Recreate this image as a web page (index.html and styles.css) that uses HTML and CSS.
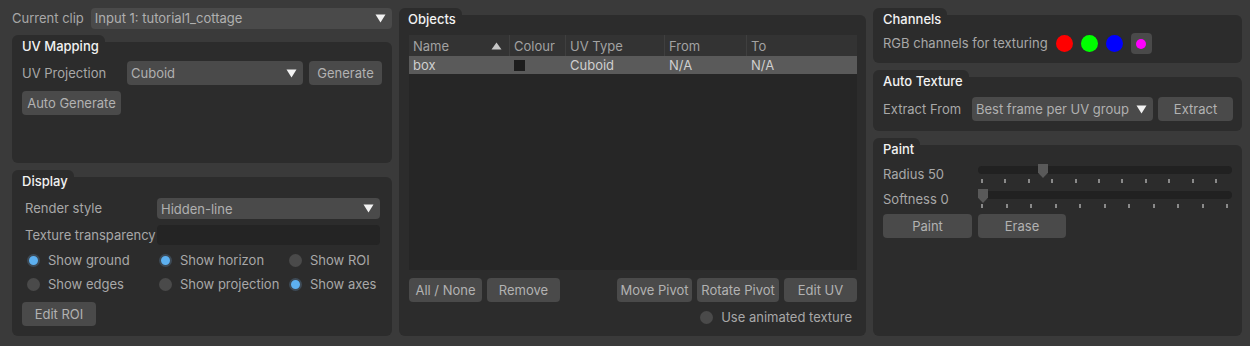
FILE: index.html
```html
<!DOCTYPE html>
<html lang="en">
<head>
    <meta charset="UTF-8">
    <meta name="viewport" content="width=device-width, initial-scale=1.0">
    <title>UV Project</title>
    <link rel="stylesheet" href="styles.css">
</head>
<body>
    <div class="col col-left">
        <div class="row clip-row">
            <span class="label clip-label">Current clip</span>
            <div class="combo combo-clip">
                <span>Input 1: tutorial1_cottage</span>
                <svg class="arrow" width="11" height="9" viewBox="0 0 11 9"><path d="M0.5 0.5 H10.5 L5.5 8.5 Z" fill="#f2f2f2"/></svg>
            </div>
        </div>

        <section class="group group-uv">
            <div class="tab">UV Mapping</div>
            <div class="box box-uv">
                <div class="row">
                    <span class="label uv-label">UV Projection</span>
                    <div class="combo combo-uv">
                        <span>Cuboid</span>
                        <svg class="arrow" width="11" height="9" viewBox="0 0 11 9"><path d="M0.5 0.5 H10.5 L5.5 8.5 Z" fill="#f2f2f2"/></svg>
                    </div>
                    <button class="btn btn-generate">Generate</button>
                </div>
                <button class="btn btn-auto">Auto Generate</button>
            </div>
        </section>

        <section class="group group-display">
            <div class="tab">Display</div>
            <div class="box box-display">
                <div class="row">
                    <span class="label display-label">Render style</span>
                    <div class="combo combo-render">
                        <span>Hidden-line</span>
                        <svg class="arrow" width="11" height="9" viewBox="0 0 11 9"><path d="M0.5 0.5 H10.5 L5.5 8.5 Z" fill="#f2f2f2"/></svg>
                    </div>
                </div>
                <div class="row row-transp">
                    <span class="label display-label">Texture transparency</span>
                    <div class="field"></div>
                </div>
                <div class="radio-grid">
                    <label class="opt"><span class="radio on"></span>Show ground</label>
                    <label class="opt"><span class="radio on"></span>Show horizon</label>
                    <label class="opt"><span class="radio"></span>Show ROI</label>
                    <label class="opt"><span class="radio"></span>Show edges</label>
                    <label class="opt"><span class="radio"></span>Show projection</label>
                    <label class="opt"><span class="radio on"></span>Show axes</label>
                </div>
                <button class="btn btn-roi">Edit ROI</button>
            </div>
        </section>
    </div>

    <div class="col col-center">
        <section class="group group-objects">
            <div class="tab tab-objects">Objects</div>
            <div class="box box-objects">
                <div class="table">
                    <div class="trow thead">
                        <div class="cell">Name<svg class="sort" width="11" height="8" viewBox="0 0 11 8"><path d="M0.5 7.5 H10.5 L5.5 0.5 Z" fill="#c6c6c6"/></svg></div>
                        <div class="cell">Colour</div>
                        <div class="cell">UV Type</div>
                        <div class="cell">From</div>
                        <div class="cell">To</div>
                    </div>
                    <div class="trow selected">
                        <div class="cell">box</div>
                        <div class="cell"><span class="swatch"></span></div>
                        <div class="cell">Cuboid</div>
                        <div class="cell">N/A</div>
                        <div class="cell">N/A</div>
                    </div>
                </div>
                <div class="row btn-row">
                    <button class="btn w-73">All / None</button>
                    <button class="btn w-73">Remove</button>
                    <button class="btn btn-move">Move Pivot</button>
                    <button class="btn btn-rotate">Rotate Pivot</button>
                    <button class="btn w-73">Edit UV</button>
                </div>
                <div class="row anim-row">
                    <label class="opt"><span class="radio"></span>Use animated texture</label>
                </div>
            </div>
        </section>
    </div>

    <div class="col col-right">
        <section class="group group-channels">
            <div class="tab">Channels</div>
            <div class="box box-channels">
                <div class="row channel-row">
                    <span class="label">RGB channels for texturing</span>
                    <span class="dot red"></span>
                    <span class="dot green"></span>
                    <span class="dot blue"></span>
                    <span class="alpha-btn"><span class="alpha-dot"></span></span>
                </div>
            </div>
        </section>

        <section class="group group-auto">
            <div class="tab">Auto Texture</div>
            <div class="box box-auto">
                <div class="row">
                    <span class="label extract-label">Extract From</span>
                    <div class="combo combo-extract">
                        <span>Best frame per UV group</span>
                        <svg class="arrow" width="11" height="9" viewBox="0 0 11 9"><path d="M0.5 0.5 H10.5 L5.5 8.5 Z" fill="#f2f2f2"/></svg>
                    </div>
                    <button class="btn btn-extract">Extract</button>
                </div>
            </div>
        </section>

        <section class="group group-paint">
            <div class="tab">Paint</div>
            <div class="box box-paint">
                <div class="slider-grid">
                    <span class="label">Radius 50</span>
                    <div class="slider">
                        <div class="track"><span class="thumb" style="left: 60px"></span></div>
                        <div class="ticks ticks-radius">
                            <i></i><i></i><i></i><i></i><i></i><i></i><i></i><i></i><i></i><i></i><i></i>
                        </div>
                    </div>
                    <span class="label">Softness 0</span>
                    <div class="slider">
                        <div class="track"><span class="thumb" style="left: 0px"></span></div>
                        <div class="ticks ticks-soft">
                            <i></i><i></i><i></i><i></i><i></i><i></i><i></i><i></i><i></i><i></i><i></i>
                        </div>
                    </div>
                </div>
                <div class="row paint-row">
                    <button class="btn btn-paint">Paint</button>
                    <button class="btn btn-erase">Erase</button>
                </div>
            </div>
        </section>
    </div>
</body>
</html>
```

FILE: styles.css
```css
body {
    margin: 0;
    height: 346px;
    box-sizing: border-box;
    padding: 8px 8px 10px 12px;
    background-color: #3a3a3a;
    font-family: Inter, "Noto Sans", sans-serif;
    font-size: 13px;
    color: #a8a8a8;
    display: grid;
    grid-template-columns: 380px 467px 369px;
    column-gap: 7px;
    overflow: hidden;
}
.col {
    display: flex;
    flex-direction: column;
    gap: 7px;
    min-height: 0;
}
.row {
    display: flex;
    align-items: center;
}
.label {
    white-space: nowrap;
    line-height: 17px;
}

/* group boxes */
.group {
    display: flex;
    flex-direction: column;
}
.tab {
    position: relative;
    z-index: 1;
    align-self: flex-start;
    height: 20px;
    box-sizing: border-box;
    padding: 3px 6px 0 10px;
    line-height: 17px;
    margin-bottom: -13px;
    background-color: #2c2c2c;
    border-radius: 6px 6px 0 0;
    color: #f2f2f2;
    font-weight: 500;
}
.box {
    flex: 1;
    background-color: #2c2c2c;
    border-radius: 6px;
    box-sizing: border-box;
}

/* controls */
.combo {
    display: flex;
    align-items: center;
    justify-content: space-between;
    background-color: #4a4a4a;
    border-radius: 4px;
    color: #b0b0b0;
    padding: 0 6px 0 4px;
    box-sizing: border-box;
}
.btn {
    font: inherit;
    color: #b2b2b2;
    background-color: #4a4a4a;
    border: none;
    border-radius: 4px;
    height: 24px;
    padding: 0;
    text-align: center;
    white-space: nowrap;
}
.field {
    flex: 1;
    height: 20px;
    background-color: #242424;
    border-radius: 4px;
}
.opt {
    display: flex;
    align-items: center;
    gap: 8px;
    white-space: nowrap;
    height: 20px;
}
.radio {
    width: 13px;
    height: 13px;
    border-radius: 50%;
    background-color: #4a4a4a;
    box-sizing: border-box;
    flex-shrink: 0;
}
.radio.on {
    background-color: #5db0f0;
    border: 2px solid #3d4a56;
}

/* left column */
.clip-row {
    height: 20px;
    gap: 7px;
}
.combo-clip {
    flex: 1;
    height: 21px;
}
.group-uv {
    height: 128px;
}
.box-uv {
    padding: 19px 10px 0 10px;
}
.uv-label {
    width: 105px;
}
.combo-uv {
    width: 176px;
    height: 24px;
}
.btn-generate {
    width: 73px;
    margin-left: 6px;
}
.btn-auto {
    display: block;
    width: 99px;
    margin-top: 6px;
}
.group-display {
    flex: 1;
}
.box-display {
    padding: 21px 12px 0 13px;
}
.display-label {
    width: 132px;
}
.combo-render {
    flex: 1;
    height: 21px;
}
.row-transp {
    margin-top: 6px;
}
.radio-grid {
    display: grid;
    grid-template-columns: 132px 130px 1fr;
    row-gap: 4px;
    margin-top: 5px;
    padding-left: 2px;
}
.btn-roi {
    display: block;
    width: 74px;
    margin: 8px 0 0 -3px;
}

/* centre column */
.group-objects {
    flex: 1;
}
.tab-objects {
    padding-left: 9px;
}
.box-objects {
    display: flex;
    flex-direction: column;
    padding: 20px 9px 9px 10px;
}
.table {
    flex: 1;
    background-color: #262626;
}
.trow {
    display: grid;
    grid-template-columns: 101px 56px 99px 82px 1fr;
}
.thead {
    height: 21px;
    background-color: #333333;
    color: #a2a2a2;
}
.thead .cell {
    border-right: 1px solid #3f3f3f;
}
.thead .cell:last-child {
    border-right: none;
}
.cell {
    display: flex;
    align-items: center;
    justify-content: space-between;
    padding: 0 7px 0 4px;
    white-space: nowrap;
}
.selected {
    height: 18px;
    background-color: #5a5a5a;
    color: #cfcfcf;
}
.swatch {
    width: 11px;
    height: 11px;
    background-color: #1d1d1d;
}
.btn-row {
    margin-top: 8px;
    gap: 5px;
}
.w-73 {
    width: 73px;
}
.btn-move {
    width: 75px;
    margin-left: auto;
}
.btn-rotate {
    width: 82px;
}
.anim-row {
    justify-content: flex-end;
    margin-top: 5px;
    padding-right: 5px;
}

/* right column */
.group-channels {
    height: 55px;
}
.box-channels {
    padding: 18px 10px 0 10px;
}
.channel-row {
    gap: 8px;
    height: 21px;
}
.dot {
    width: 17px;
    height: 17px;
    border-radius: 50%;
}
.red { background-color: #ff0000; }
.green { background-color: #00ff00; }
.blue { background-color: #0000ff; }
.alpha-btn {
    width: 21px;
    height: 21px;
    border-radius: 4px;
    background-color: #4a4a4a;
    display: flex;
    align-items: center;
    justify-content: center;
}
.alpha-dot {
    width: 10px;
    height: 10px;
    border-radius: 50%;
    background-color: #ff00ff;
}
.group-auto {
    height: 61px;
}
.box-auto {
    padding: 20px 9px 0 10px;
}
.extract-label {
    width: 89px;
}
.combo-extract {
    width: 181px;
    height: 24px;
}
.btn-extract {
    width: 75px;
    margin-left: 5px;
}
.group-paint {
    flex: 1;
}
.box-paint {
    padding: 21px 10px 0 10px;
}
.slider-grid {
    display: grid;
    grid-template-columns: 95px 254px;
    grid-auto-rows: 17px;
    row-gap: 8px;
    align-items: center;
}
.slider {
    display: flex;
    flex-direction: column;
}
.track {
    height: 8px;
    background-color: #212121;
    border-radius: 4px;
    position: relative;
}
.thumb {
    position: absolute;
    top: -2px;
    width: 10px;
    height: 14px;
    background-color: #595959;
    clip-path: polygon(0 0, 100% 0, 100% 62%, 50% 100%, 0 62%);
}
.ticks {
    display: flex;
    justify-content: space-between;
    height: 4px;
    margin-top: 5px;
}
.ticks i {
    width: 2px;
    background-color: #8a8a8a;
}
.ticks-radius {
    padding: 0 15px 0 3px;
}
.ticks-soft {
    padding: 0 4px 0 3px;
}
.paint-row {
    margin-top: 6px;
    gap: 6px;
}
.btn-paint {
    width: 89px;
}
.btn-erase {
    width: 88px;
}
```
